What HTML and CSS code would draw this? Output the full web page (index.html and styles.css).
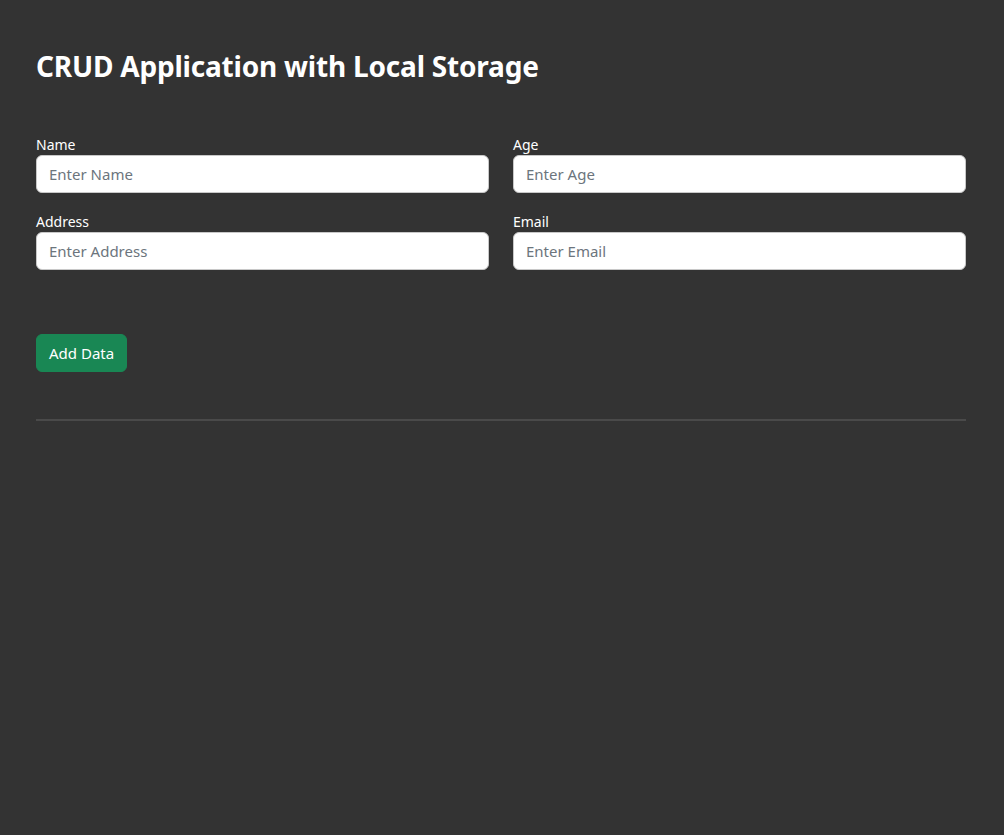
FILE: index.html
```html
<!DOCTYPE html>
<html>
<head>
<meta charset="utf-8">
<link rel="stylesheet" href="styles.css">
</head>
<body>
<div class="container">
  <h1 class="title">CRUD Application with Local Storage</h1>
  <form class="form">
    <div class="grid">
      <div class="field">
        <label class="label" for="name">Name</label>
        <input class="input" id="name" type="text" placeholder="Enter Name">
      </div>
      <div class="field">
        <label class="label" for="age">Age</label>
        <input class="input" id="age" type="text" placeholder="Enter Age">
      </div>
      <div class="field">
        <label class="label" for="address">Address</label>
        <input class="input" id="address" type="text" placeholder="Enter Address">
      </div>
      <div class="field">
        <label class="label" for="email">Email</label>
        <input class="input" id="email" type="text" placeholder="Enter Email">
      </div>
    </div>
    <button class="btn" type="button">Add Data</button>
  </form>
  <hr class="divider">
</div>
</body>
</html>
```
FILE: styles.css
```css
html, body {
  margin: 0;
  padding: 0;
  background: #333333;
  height: 100%;
}
body {
  font-family: "Noto Sans", "Open Sans", sans-serif;
  color: #ffffff;
}
.container {
  width: 930px;
  margin-left: 36px;
  padding-top: 46px;
}
.title {
  margin: 0;
  font-size: 28px;
  font-weight: 700;
  line-height: 40px;
  letter-spacing: -0.2px;
}
.form {
  margin-top: 49px;
}
.grid {
  display: grid;
  grid-template-columns: 453px 453px;
  column-gap: 24px;
  row-gap: 19px;
}
.field {
  display: flex;
  flex-direction: column;
}
.label {
  font-size: 14px;
  line-height: 20px;
  margin-bottom: 0;
}
.input {
  box-sizing: border-box;
  height: 38px;
  padding: 6px 12px;
  font-family: "Noto Sans", "Open Sans", sans-serif;
  font-size: 15px;
  color: #212529;
  background: #ffffff;
  border: 1px solid #c8c8c8;
  border-radius: 6px;
  outline: none;
}
.input::placeholder {
  color: #6c757d;
}
.btn {
  display: block;
  margin-top: 64px;
  height: 38px;
  padding: 0 12px;
  font-family: "Noto Sans", "Open Sans", sans-serif;
  font-size: 15px;
  color: #ffffff;
  background: #198754;
  border: 1px solid #198754;
  border-radius: 6px;
}
.divider {
  margin: 47px 0 0 0;
  border: 0;
  border-top: 2px solid #4a4a4a;
}
```
